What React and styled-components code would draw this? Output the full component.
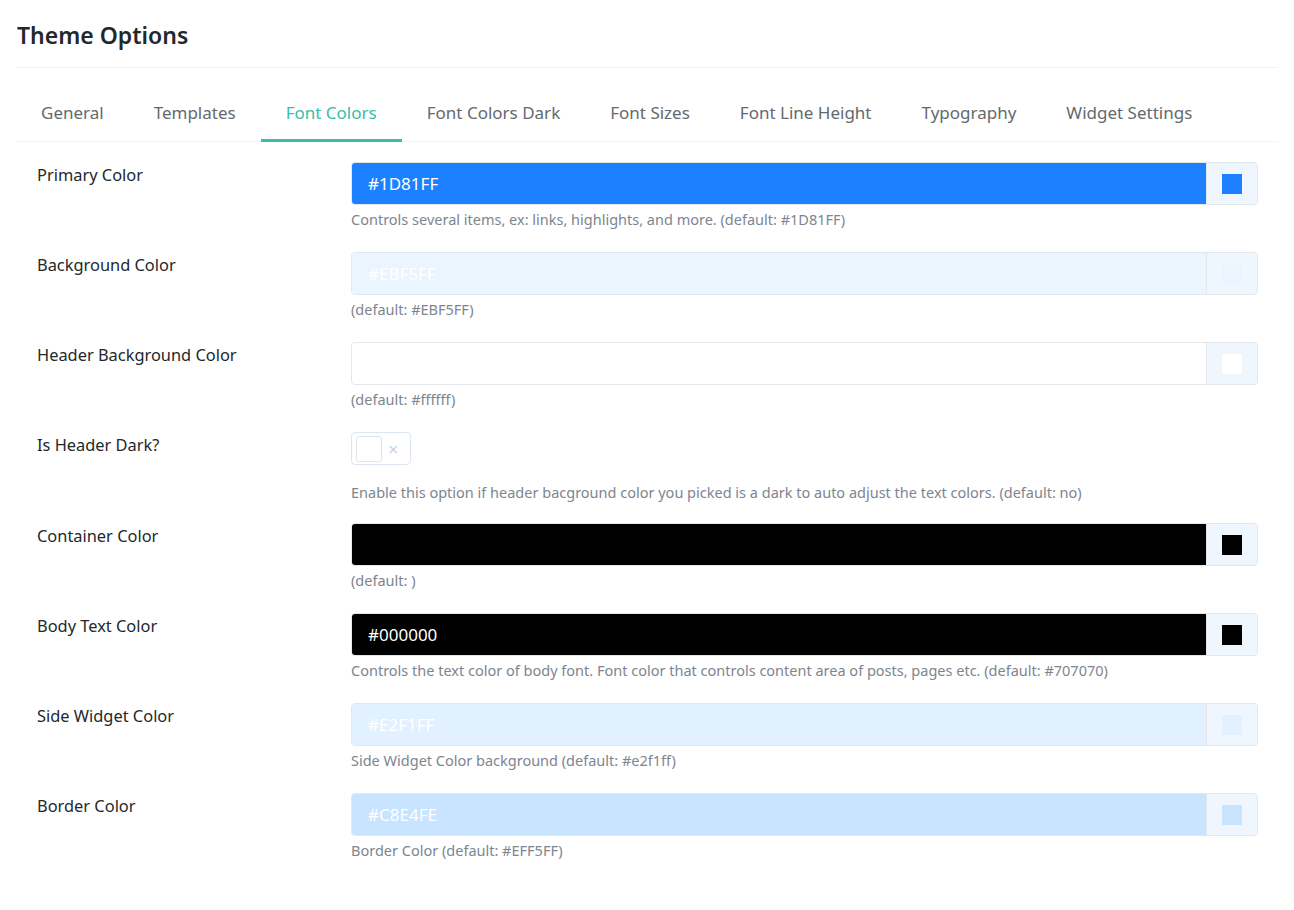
import React from "react";
import styled, { createGlobalStyle } from "styled-components";

const Global = createGlobalStyle`
  html, body { margin: 0; padding: 0; background: #fff; }
  body { font-family: "Segoe UI", "Noto Sans", sans-serif; color: #23282d; }
  * { box-sizing: border-box; }
`;

const Page = styled.div`
  padding: 0 16px;
  width: 1294px;
`;

const Title = styled.h1`
  margin: 0;
  padding: 19px 1px 0;
  height: 68px;
  font-size: 23px;
  font-weight: 600;
  color: #23282d;
  border-bottom: 1px solid #eef4fa;
  width: 1262px;
`;

const Tabs = styled.nav`
  display: flex;
  width: 1262px;
  border-bottom: 1px solid #eef4fa;
  margin-top: 19px;
`;

const Tab = styled.div`
  padding: 0 25px;
  height: 55px;
  line-height: 52px;
  font-size: 17px;
  color: ${(p) => (p.active ? "#3bbca8" : "#646970")};
  border-bottom: 3px solid ${(p) => (p.active ? "#3bbca8" : "transparent")};
  margin-bottom: -1px;
  white-space: nowrap;
`;

const Rows = styled.div`
  width: 1262px;
  padding-top: 20px;
`;

const Row = styled.div`
  display: grid;
  grid-template-columns: 335px 907px;
  height: ${(p) => p.h || 90}px;
`;

const Label = styled.div`
  padding: 1px 0 0 21px;
  font-size: 16.4px;
  color: #23282d;
  line-height: 24px;
`;

const Field = styled.div`
  display: flex;
  flex-direction: column;
`;

const InputGroup = styled.div`
  display: flex;
  height: 43px;
  border: 1px solid #e3e6ea;
  border-radius: 4px;
  overflow: hidden;
`;

const ColorInput = styled.div`
  flex: 1;
  background: ${(p) => p.bg};
  color: #fff;
  font-size: 17px;
  line-height: 41px;
  padding-left: 16px;
`;

const Swatch = styled.div`
  width: 51px;
  background: #eff6fe;
  border-left: 1px solid #e3e6ea;
  display: flex;
  align-items: center;
  justify-content: center;
`;

const SwatchBox = styled.div`
  width: 20px;
  height: 20px;
  background: ${(p) => p.bg};
`;

const Help = styled.div`
  margin-top: 5px;
  font-size: 14.5px;
  color: #7e8590;
  line-height: 19px;
`;

const Toggle = styled.div`
  width: 60px;
  height: 33px;
  border: 1px solid #dde6f0;
  border-radius: 4px;
  display: flex;
  align-items: center;
  padding: 0 4px;
  gap: 6px;
`;

const Knob = styled.div`
  width: 26px;
  height: 26px;
  border: 1px solid #dde6f0;
  border-radius: 3px;
  background: #fff;
`;

const Cross = styled.span`
  color: #c8d3e0;
  font-size: 18px;
  line-height: 1;
`;

const ToggleHelp = styled(Help)`
  margin-top: 18px;
`;

const tabs = [
  "General",
  "Templates",
  "Font Colors",
  "Font Colors Dark",
  "Font Sizes",
  "Font Line Height",
  "Typography",
  "Widget Settings",
];

const rows = [
  { label: "Primary Color", bg: "#1d81ff", text: "#1D81FF", help: "Controls several items, ex: links, highlights, and more. (default: #1D81FF)" },
  { label: "Background Color", bg: "#ebf5ff", text: "#EBF5FF", help: "(default: #EBF5FF)" },
  { label: "Header Background Color", bg: "#ffffff", text: "", help: "(default: #ffffff)" },
  { toggle: true, label: "Is Header Dark?", help: "Enable this option if header bacground color you picked is a dark to auto adjust the text colors. (default: no)" },
  { label: "Container Color", bg: "#000000", text: "", help: "(default: )" },
  { label: "Body Text Color", bg: "#000000", text: "#000000", help: "Controls the text color of body font. Font color that controls content area of posts, pages etc. (default: #707070)" },
  { label: "Side Widget Color", bg: "#e2f1ff", text: "#E2F1FF", help: "Side Widget Color background (default: #e2f1ff)" },
  { label: "Border Color", bg: "#c8e4fe", text: "#C8E4FE", help: "Border Color (default: #EFF5FF)" },
];

export default function App() {
  return (
    <Page>
      <Global />
      <Title>Theme Options</Title>
      <Tabs>
        {tabs.map((t) => (
          <Tab key={t} active={t === "Font Colors"}>{t}</Tab>
        ))}
      </Tabs>
      <Rows>
        {rows.map((r) => (
          <Row key={r.label} h={r.toggle ? 91 : 90}>
            <Label>{r.label}</Label>
            {r.toggle ? (
              <Field>
                <Toggle>
                  <Knob />
                  <Cross>×</Cross>
                </Toggle>
                <ToggleHelp>{r.help}</ToggleHelp>
              </Field>
            ) : (
              <Field>
                <InputGroup>
                  <ColorInput bg={r.bg}>{r.text}</ColorInput>
                  <Swatch>
                    <SwatchBox bg={r.bg} />
                  </Swatch>
                </InputGroup>
                <Help>{r.help}</Help>
              </Field>
            )}
          </Row>
        ))}
      </Rows>
    </Page>
  );
}
